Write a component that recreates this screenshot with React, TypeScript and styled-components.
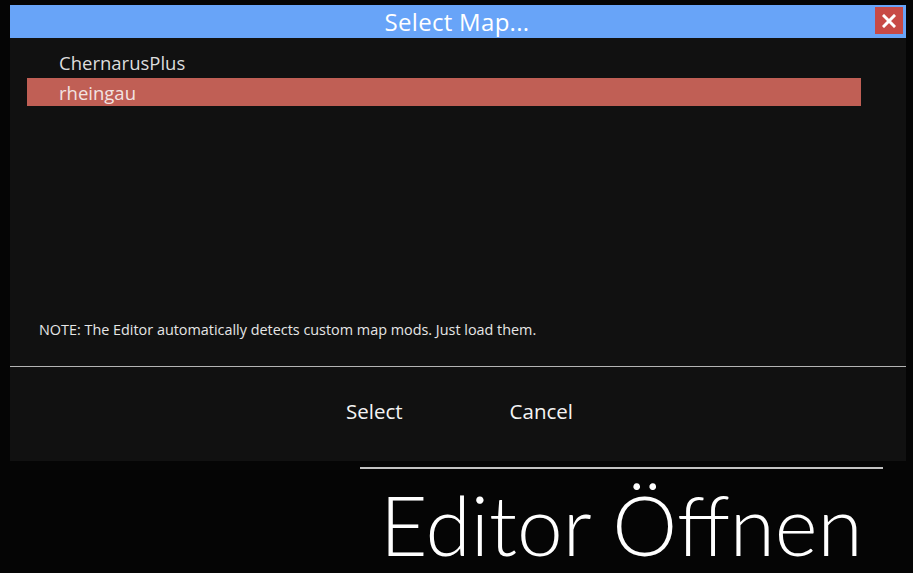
import React from "react";
import styled, { createGlobalStyle } from "styled-components";

const GlobalStyle = createGlobalStyle`
  html, body {
    margin: 0;
    padding: 0;
    background: #050505;
  }
  body {
    font-family: "Open Sans", "Liberation Sans", sans-serif;
  }
`;

const Page = styled.div`
  width: 913px;
  height: 573px;
  display: flex;
  flex-direction: column;
  padding-top: 5px;
  box-sizing: border-box;
  overflow: hidden;
`;

const Dialog = styled.div`
  margin-left: 10px;
  width: 896px;
  height: 456px;
  flex-shrink: 0;
  display: flex;
  flex-direction: column;
  background: #111111;
`;

const TitleBar = styled.div`
  position: relative;
  height: 33px;
  background: #68a4f8;
  display: flex;
  align-items: center;
  justify-content: center;
  color: #ffffff;
  font-size: 24px;
  letter-spacing: 0.3px;
  padding-right: 2px;
`;

const CloseButton = styled.button`
  position: absolute;
  right: 3px;
  top: 2px;
  width: 28px;
  height: 27px;
  border: none;
  padding: 0;
  background: #c84a46;
  display: flex;
  align-items: center;
  justify-content: center;
`;

const Content = styled.div`
  height: 328px;
  display: flex;
  flex-direction: column;
  box-sizing: border-box;
  padding-top: 10px;
`;

const List = styled.div`
  margin-left: 17px;
  width: 834px;
  display: flex;
  flex-direction: column;
  gap: 2px;
  flex: 1;
`;

const Row = styled.div<{ $selected?: boolean }>`
  height: 28px;
  display: flex;
  align-items: center;
  padding-left: 32px;
  font-size: 18.5px;
  color: ${(p) => (p.$selected ? "#f2e4e2" : "#dddddd")};
  background: ${(p) => (p.$selected ? "#c05f55" : "transparent")};
`;

const Note = styled.div`
  padding: 0 0 28px 29px;
  font-size: 14.4px;
  line-height: 16px;
  color: #e6e6e6;
`;

const Separator = styled.div`
  height: 1px;
  background: #b4b4b4;
`;

const Footer = styled.div`
  flex: 1;
  display: flex;
  align-items: center;
  justify-content: center;
  gap: 107px;
  padding: 0 0 7px 3px;
`;

const FooterButton = styled.button`
  border: none;
  background: transparent;
  color: #f4f4f4;
  font-family: "Open Sans", "Liberation Sans", sans-serif;
  font-size: 20.5px;
  padding: 0;
`;

const Bottom = styled.div`
  display: flex;
  flex-direction: column;
  align-items: flex-start;
  padding-left: 360px;
  padding-top: 6px;
`;

const Rule = styled.div`
  width: 523px;
  height: 2px;
  background: #c2c2c2;
`;

const BigTitle = styled.div`
  margin-left: 20px;
  margin-top: 17px;
  font-family: Lato, "Open Sans", sans-serif;
  font-weight: 300;
  font-size: 82px;
  line-height: 76px;
  color: #ffffff;
  white-space: nowrap;
`;

export default function App() {
  return (
    <>
      <GlobalStyle />
      <Page>
        <Dialog>
          <TitleBar>
            Select Map...
            <CloseButton aria-label="close">
              <svg width="14" height="14" viewBox="0 0 14 14">
                <path
                  d="M2 2 L12 12 M12 2 L2 12"
                  stroke="#ffffff"
                  strokeWidth="3"
                  strokeLinecap="square"
                />
              </svg>
            </CloseButton>
          </TitleBar>
          <Content>
            <List>
              <Row>ChernarusPlus</Row>
              <Row $selected>rheingau</Row>
            </List>
            <Note>
              NOTE: The Editor automatically detects custom map mods. Just load
              them.
            </Note>
          </Content>
          <Separator />
          <Footer>
            <FooterButton>Select</FooterButton>
            <FooterButton>Cancel</FooterButton>
          </Footer>
        </Dialog>
        <Bottom>
          <Rule />
          <BigTitle>Editor Öffnen</BigTitle>
        </Bottom>
      </Page>
    </>
  );
}
